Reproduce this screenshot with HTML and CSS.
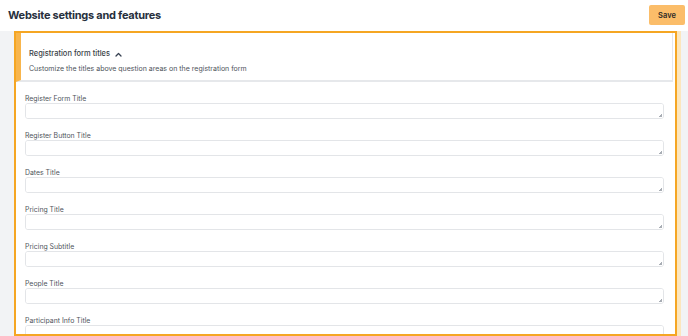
FILE: index.html
```html
<!DOCTYPE html>
<html lang="en">
<head>
    <meta charset="UTF-8">
    <meta name="viewport" content="width=device-width, initial-scale=1.0">
    <title>Website settings and features</title>
    <link rel="stylesheet" href="styles.css">
</head>
<body>
    <div class="topbar">
        <h1>Website settings and features</h1>
        <button class="save-btn">Save</button>
    </div>

    <div class="main">
        <div class="card">
            <div class="section-head">
                <div class="section-title">
                    Registration form titles
                    <svg class="chevron" width="7" height="5" viewBox="0 0 7 5">
                        <polyline points="1,4 3.5,1.5 6,4" fill="none" stroke="#374151" stroke-width="1.3" stroke-linecap="round" stroke-linejoin="round"/>
                    </svg>
                </div>
                <p class="section-desc">Customize the titles above question areas on the registration form</p>
            </div>

            <div class="form">
                <div class="field">
                    <label for="registerFormTitle">Register Form Title</label>
                    <div class="input-wrap"><textarea id="registerFormTitle"></textarea></div>
                </div>
                <div class="field">
                    <label for="registerButtonTitle">Register Button Title</label>
                    <div class="input-wrap"><textarea id="registerButtonTitle"></textarea></div>
                </div>
                <div class="field">
                    <label for="datesTitle">Dates Title</label>
                    <div class="input-wrap"><textarea id="datesTitle"></textarea></div>
                </div>
                <div class="field">
                    <label for="pricingTitle">Pricing Title</label>
                    <div class="input-wrap"><textarea id="pricingTitle"></textarea></div>
                </div>
                <div class="field">
                    <label for="pricingSubtitle">Pricing Subtitle</label>
                    <div class="input-wrap"><textarea id="pricingSubtitle"></textarea></div>
                </div>
                <div class="field">
                    <label for="peopleTitle">People Title</label>
                    <div class="input-wrap"><textarea id="peopleTitle"></textarea></div>
                </div>
                <div class="field">
                    <label for="participantInfoTitle">Participant Info Title</label>
                    <div class="input-wrap"><textarea id="participantInfoTitle"></textarea></div>
                </div>
            </div>
        </div>
    </div>
</body>
</html>
```

FILE: styles.css
```css
* {
    box-sizing: border-box;
}

body {
    margin: 0;
    font-family: Inter, "Liberation Sans", sans-serif;
    background: #f2f3f5;
    height: 336px;
    overflow: hidden;
}

.topbar {
    height: 31px;
    background: #fff;
    display: flex;
    align-items: center;
    justify-content: space-between;
    padding: 0 3px 0 8px;
}

.topbar h1 {
    margin: 0 0 2px;
    font-size: 11px;
    font-weight: 700;
    color: #27303d;
    letter-spacing: -0.25px;
}

.save-btn {
    width: 36px;
    height: 20px;
    margin-bottom: 1px;
    border: none;
    border-radius: 2px;
    background-color: #fbbd69;
    color: #2d2a26;
    font-family: inherit;
    font-size: 7.5px;
    font-weight: 600;
    cursor: pointer;
}

.main {
    padding: 0 11px 0 14px;
}

.card {
    height: 305px;
    overflow: hidden;
    background: #fff;
    border: 2px solid #f5a623;
    box-shadow: 4px 0 0 #fce6bd;
}

.section-head {
    margin-right: 2px;
    padding: 16px 12px 6px 8px;
    border-left: 5px solid #f8b54c;
    border-right: 1px solid #e6e8eb;
    border-bottom: 2px solid #e6e8eb;
}

.section-title {
    display: flex;
    align-items: center;
    gap: 5px;
    font-size: 7.5px;
    font-weight: 500;
    line-height: 10px;
    color: #3a3f47;
}

.section-desc {
    margin: 5px 0 0;
    font-size: 7px;
    line-height: 10px;
    color: #4d5259;
}

.form {
    padding: 12px 11px 0 9px;
}

.field {
    margin-bottom: 12px;
}

.field label {
    display: block;
    font-size: 6.9px;
    line-height: 9px;
    color: #50555c;
}

.input-wrap {
    position: relative;
}

.input-wrap::after {
    content: "";
    position: absolute;
    right: 2px;
    bottom: 2px;
    width: 4px;
    height: 4px;
    background: linear-gradient(135deg, transparent 50%, #a8adb4 50%);
    pointer-events: none;
}

.field textarea {
    display: block;
    width: 100%;
    height: 16px;
    padding: 0;
    margin: 0;
    border: 1px solid #e3e5e8;
    border-radius: 3px;
    background: #fff;
    resize: none;
}
```
